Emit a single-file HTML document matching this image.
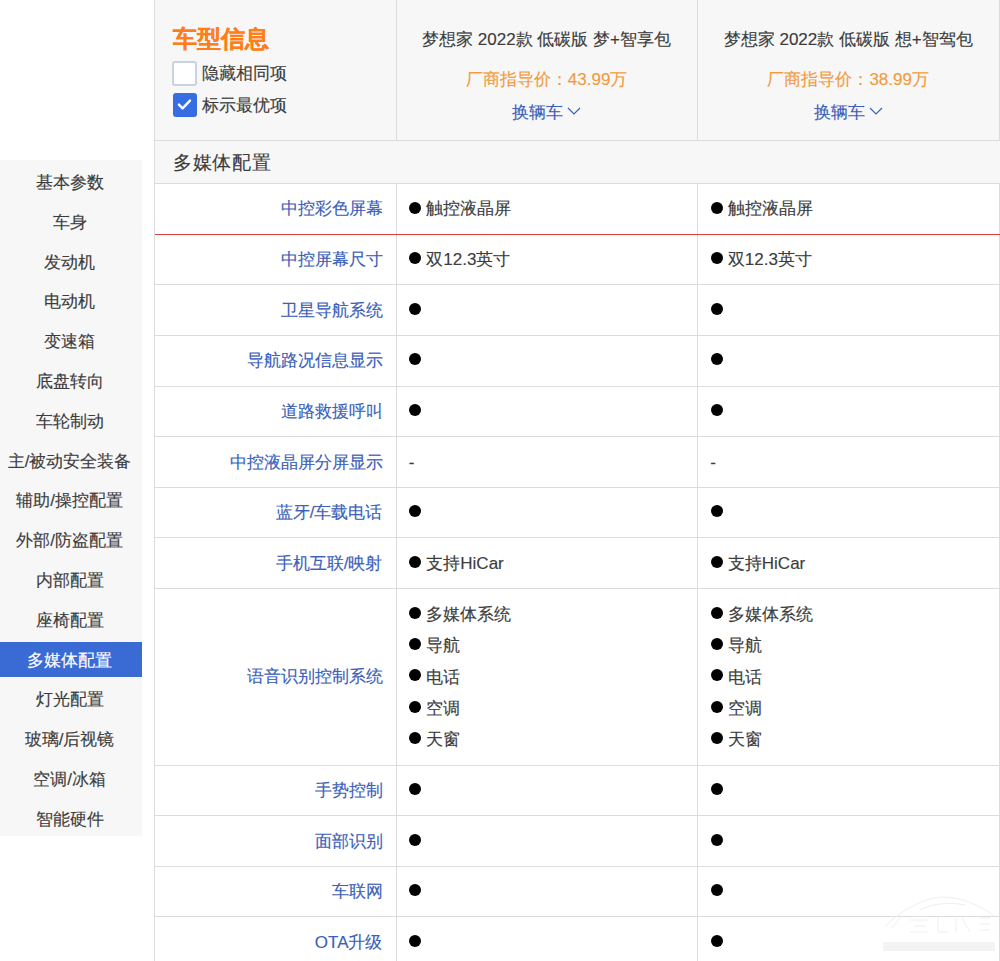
<!DOCTYPE html>
<html><head><meta charset="utf-8"><style>
html,body{margin:0;padding:0;width:1000px;height:961px;overflow:hidden;background:#fff;}
body{position:relative;font-family:"Liberation Sans",sans-serif;color:#3c3c3c;}
.abs{position:absolute;}
.t{position:absolute;white-space:nowrap;font-size:17px;line-height:20px;height:20px;-webkit-text-stroke:0.15px currentColor;}
.hl{position:absolute;height:1px;background:#dcdcdc;}
.vl{position:absolute;width:1px;background:#dcdcdc;}
.dot{position:absolute;width:12px;height:12px;border-radius:50%;background:#000;}
</style></head><body>

<div class="abs" style="left:0;top:160px;width:142.3px;height:676.4px;background:#f7f7f7"></div>
<div class="t" style="left:0;width:139px;text-align:center;top:173.00px;color:#3c3c3c">基本参数</div>
<div class="t" style="left:0;width:139px;text-align:center;top:212.80px;color:#3c3c3c">车身</div>
<div class="t" style="left:0;width:139px;text-align:center;top:252.60px;color:#3c3c3c">发动机</div>
<div class="t" style="left:0;width:139px;text-align:center;top:292.40px;color:#3c3c3c">电动机</div>
<div class="t" style="left:0;width:139px;text-align:center;top:332.20px;color:#3c3c3c">变速箱</div>
<div class="t" style="left:0;width:139px;text-align:center;top:372.00px;color:#3c3c3c">底盘转向</div>
<div class="t" style="left:0;width:139px;text-align:center;top:411.80px;color:#3c3c3c">车轮制动</div>
<div class="t" style="left:0;width:139px;text-align:center;top:451.60px;color:#3c3c3c">主/被动安全装备</div>
<div class="t" style="left:0;width:139px;text-align:center;top:491.40px;color:#3c3c3c">辅助/操控配置</div>
<div class="t" style="left:0;width:139px;text-align:center;top:531.20px;color:#3c3c3c">外部/防盗配置</div>
<div class="t" style="left:0;width:139px;text-align:center;top:571.00px;color:#3c3c3c">内部配置</div>
<div class="t" style="left:0;width:139px;text-align:center;top:610.80px;color:#3c3c3c">座椅配置</div>
<div class="abs" style="left:0;top:641.6px;width:142.3px;height:35.7px;background:#3a6bd4"></div>
<div class="t" style="left:0;width:139px;text-align:center;top:650.60px;color:#fff">多媒体配置</div>
<div class="t" style="left:0;width:139px;text-align:center;top:690.40px;color:#3c3c3c">灯光配置</div>
<div class="t" style="left:0;width:139px;text-align:center;top:730.20px;color:#3c3c3c">玻璃/后视镜</div>
<div class="t" style="left:0;width:139px;text-align:center;top:770.00px;color:#3c3c3c">空调/冰箱</div>
<div class="t" style="left:0;width:139px;text-align:center;top:809.80px;color:#3c3c3c">智能硬件</div>
<div class="abs" style="left:155px;top:0;width:845px;height:183.4px;background:#f7f7f7"></div>
<div class="vl" style="left:154px;top:0;height:961px"></div>
<div class="vl" style="left:396px;top:0;height:140px"></div>
<div class="vl" style="left:697px;top:0;height:140px"></div>
<div class="vl" style="left:999px;top:0;height:140px"></div>
<div class="hl" style="left:155px;top:139.5px;width:845px"></div>
<div class="hl" style="left:155px;top:183px;width:845px"></div>
<div class="vl" style="left:396px;top:183px;height:778px"></div>
<div class="vl" style="left:697px;top:183px;height:778px"></div>
<div class="vl" style="left:999px;top:183px;height:778px"></div>
<div class="abs" style="left:155px;top:233.5px;width:845px;height:1px;background:#e0393e"></div>
<div class="t" style="left:172.5px;top:23.5px;font-size:24px;line-height:30px;height:30px;font-weight:bold;color:#ff7e1a">车型信息</div>
<div class="abs" style="left:172.3px;top:61.2px;width:20.4px;height:20.4px;border:2px solid #c9d2e3;border-radius:3px;background:#fff"></div>
<div class="t" style="left:202px;top:64.4px">隐藏相同项</div>
<div class="abs" style="left:172.5px;top:93px;width:24px;height:24px;border-radius:3px;background:#376de3"></div>
<svg class="abs" style="left:172.5px;top:93px" width="24" height="24" viewBox="0 0 24 24"><path d="M5.9 11.6 L9.6 15.4 L17.0 7.6" fill="none" stroke="#fff" stroke-width="2.4" stroke-linecap="round" stroke-linejoin="round"/></svg>
<div class="t" style="left:202px;top:96.2px">标示最优项</div>
<div class="t" style="left:396.6px;width:300px;text-align:center;top:29.7px">梦想家 2022款 低碳版 梦+智享包</div>
<div class="t" style="left:396.6px;width:300px;text-align:center;top:70.4px;color:#f29b3e">厂商指导价：43.99万</div>
<div class="t" style="left:396.6px;width:300px;text-align:center;top:102.5px;color:#3b60b9">换辆车<svg width="14" height="10" viewBox="0 0 14 10" style="margin-left:4px;vertical-align:1.5px"><path d="M1 2 L7 8 L13 2" fill="none" stroke="#3b60b9" stroke-width="1.2"/></svg></div>
<div class="t" style="left:698.2px;width:300px;text-align:center;top:29.7px">梦想家 2022款 低碳版 想+智驾包</div>
<div class="t" style="left:698.2px;width:300px;text-align:center;top:70.4px;color:#f29b3e">厂商指导价：38.99万</div>
<div class="t" style="left:698.2px;width:300px;text-align:center;top:102.5px;color:#3b60b9">换辆车<svg width="14" height="10" viewBox="0 0 14 10" style="margin-left:4px;vertical-align:1.5px"><path d="M1 2 L7 8 L13 2" fill="none" stroke="#3b60b9" stroke-width="1.2"/></svg></div>
<div class="t" style="left:173px;top:151.6px;font-size:19px;letter-spacing:0.7px;line-height:22px;height:22px">多媒体配置</div>
<div class="t" style="left:150px;width:232.5px;text-align:right;top:199.32px;color:#3b60b9">中控彩色屏幕</div>
<div class="dot" style="left:409.0px;top:201.53px"></div>
<div class="t" style="left:426.3px;top:199.32px">触控液晶屏</div>
<div class="dot" style="left:710.5px;top:201.53px"></div>
<div class="t" style="left:727.8px;top:199.32px">触控液晶屏</div>
<div class="t" style="left:150px;width:232.5px;text-align:right;top:249.97px;color:#3b60b9">中控屏幕尺寸</div>
<div class="dot" style="left:409.0px;top:252.18px"></div>
<div class="t" style="left:426.3px;top:249.97px">双12.3英寸</div>
<div class="dot" style="left:710.5px;top:252.18px"></div>
<div class="t" style="left:727.8px;top:249.97px">双12.3英寸</div>
<div class="hl" style="left:155px;top:284.20px;width:845px"></div>
<div class="t" style="left:150px;width:232.5px;text-align:right;top:300.62px;color:#3b60b9">卫星导航系统</div>
<div class="dot" style="left:409.0px;top:302.82px"></div>
<div class="dot" style="left:710.5px;top:302.82px"></div>
<div class="hl" style="left:155px;top:334.85px;width:845px"></div>
<div class="t" style="left:150px;width:232.5px;text-align:right;top:351.27px;color:#3b60b9">导航路况信息显示</div>
<div class="dot" style="left:409.0px;top:353.47px"></div>
<div class="dot" style="left:710.5px;top:353.47px"></div>
<div class="hl" style="left:155px;top:385.50px;width:845px"></div>
<div class="t" style="left:150px;width:232.5px;text-align:right;top:401.92px;color:#3b60b9">道路救援呼叫</div>
<div class="dot" style="left:409.0px;top:404.12px"></div>
<div class="dot" style="left:710.5px;top:404.12px"></div>
<div class="hl" style="left:155px;top:436.15px;width:845px"></div>
<div class="t" style="left:150px;width:232.5px;text-align:right;top:452.57px;color:#3b60b9">中控液晶屏分屏显示</div>
<div class="t" style="left:408.7px;top:452.57px">-</div>
<div class="t" style="left:710.2px;top:452.57px">-</div>
<div class="hl" style="left:155px;top:486.80px;width:845px"></div>
<div class="t" style="left:150px;width:232.5px;text-align:right;top:503.22px;color:#3b60b9">蓝牙/车载电话</div>
<div class="dot" style="left:409.0px;top:505.42px"></div>
<div class="dot" style="left:710.5px;top:505.42px"></div>
<div class="hl" style="left:155px;top:537.45px;width:845px"></div>
<div class="t" style="left:150px;width:232.5px;text-align:right;top:553.88px;color:#3b60b9">手机互联/映射</div>
<div class="dot" style="left:409.0px;top:556.07px"></div>
<div class="t" style="left:426.3px;top:553.88px">支持HiCar</div>
<div class="dot" style="left:710.5px;top:556.07px"></div>
<div class="t" style="left:727.8px;top:553.88px">支持HiCar</div>
<div class="hl" style="left:155px;top:588.10px;width:845px"></div>
<div class="t" style="left:150px;width:232.5px;text-align:right;top:667.40px;color:#3b60b9">语音识别控制系统</div>
<div class="dot" style="left:409.0px;top:606.60px"></div>
<div class="t" style="left:426.3px;top:604.80px">多媒体系统</div>
<div class="dot" style="left:409.0px;top:638.00px"></div>
<div class="t" style="left:426.3px;top:636.20px">导航</div>
<div class="dot" style="left:409.0px;top:669.40px"></div>
<div class="t" style="left:426.3px;top:667.60px">电话</div>
<div class="dot" style="left:409.0px;top:700.80px"></div>
<div class="t" style="left:426.3px;top:699.00px">空调</div>
<div class="dot" style="left:409.0px;top:732.20px"></div>
<div class="t" style="left:426.3px;top:730.40px">天窗</div>
<div class="dot" style="left:710.5px;top:606.60px"></div>
<div class="t" style="left:727.8px;top:604.80px">多媒体系统</div>
<div class="dot" style="left:710.5px;top:638.00px"></div>
<div class="t" style="left:727.8px;top:636.20px">导航</div>
<div class="dot" style="left:710.5px;top:669.40px"></div>
<div class="t" style="left:727.8px;top:667.60px">电话</div>
<div class="dot" style="left:710.5px;top:700.80px"></div>
<div class="t" style="left:727.8px;top:699.00px">空调</div>
<div class="dot" style="left:710.5px;top:732.20px"></div>
<div class="t" style="left:727.8px;top:730.40px">天窗</div>
<div class="hl" style="left:155px;top:764.50px;width:845px"></div>
<div class="t" style="left:150px;width:232.5px;text-align:right;top:780.92px;color:#3b60b9">手势控制</div>
<div class="dot" style="left:409.0px;top:783.12px"></div>
<div class="dot" style="left:710.5px;top:783.12px"></div>
<div class="hl" style="left:155px;top:815.15px;width:845px"></div>
<div class="t" style="left:150px;width:232.5px;text-align:right;top:831.57px;color:#3b60b9">面部识别</div>
<div class="dot" style="left:409.0px;top:833.77px"></div>
<div class="dot" style="left:710.5px;top:833.77px"></div>
<div class="hl" style="left:155px;top:865.80px;width:845px"></div>
<div class="t" style="left:150px;width:232.5px;text-align:right;top:882.22px;color:#3b60b9">车联网</div>
<div class="dot" style="left:409.0px;top:884.42px"></div>
<div class="dot" style="left:710.5px;top:884.42px"></div>
<div class="hl" style="left:155px;top:916.45px;width:845px"></div>
<div class="t" style="left:150px;width:232.5px;text-align:right;top:932.87px;color:#3b60b9">OTA升级</div>
<div class="dot" style="left:409.0px;top:935.07px"></div>
<div class="dot" style="left:710.5px;top:935.07px"></div>
<div class="dot" style="left:409.0px;top:985.72px"></div>
<div class="dot" style="left:710.5px;top:985.72px"></div>
<svg class="abs" style="left:880px;top:890px" width="120" height="71" viewBox="0 0 120 71"><g fill="none" stroke="#efefef" stroke-width="1"><path d="M5 37 C20 20 45 8 62 7 C80 7 100 15 114 26"/><path d="M40 20 C55 13 70 12 85 15"/><path d="M12 38 L20 28 M30 30 L48 30 M34 36 L46 36 M30 42 L48 42 M58 27 L58 42 L68 42 M76 28 L76 42 M82 28 L90 42 M100 28 L110 28 M100 34 L110 34 M100 40 L110 40"/></g><g fill="#f3f3f3"><rect x="3" y="52" width="112" height="9"/></g></svg>
</body></html>
